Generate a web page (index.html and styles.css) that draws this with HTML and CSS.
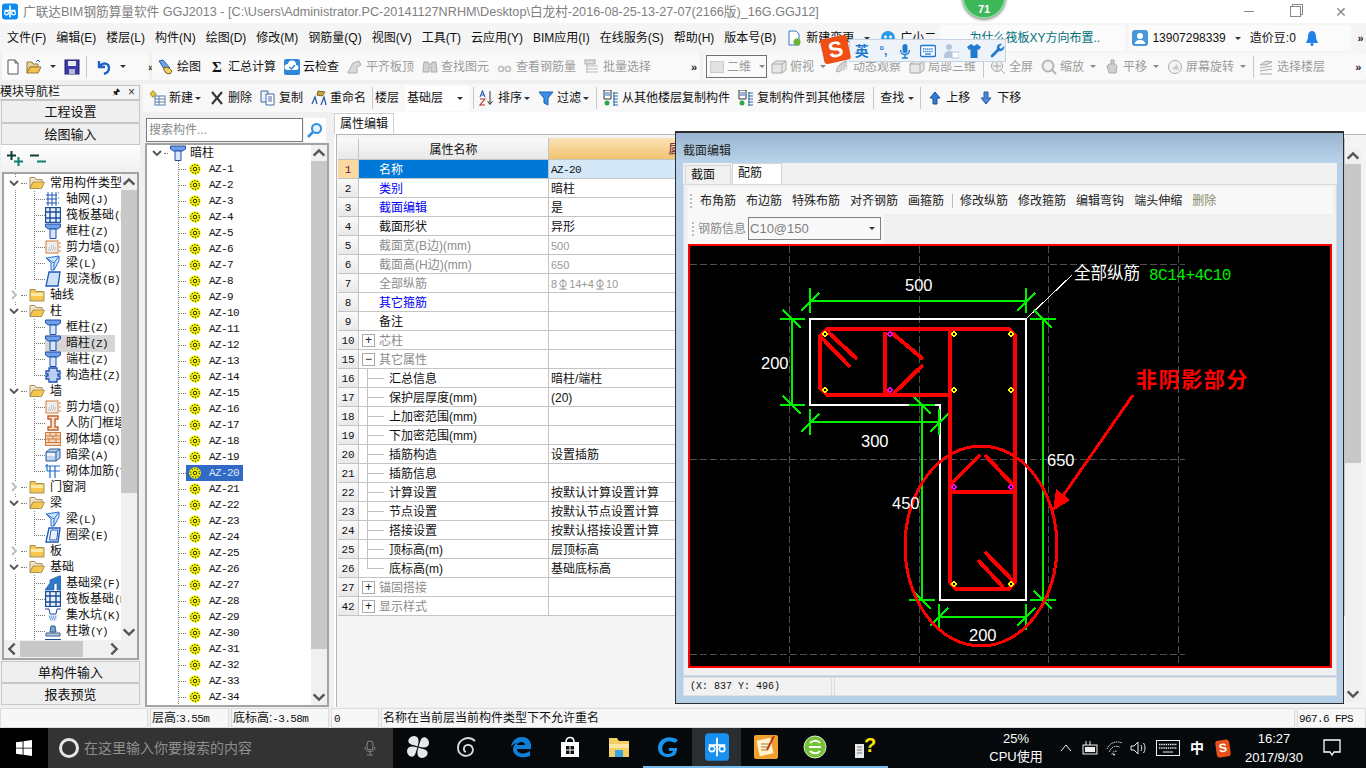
FILE: index.html
```html
<!DOCTYPE html>
<html lang="zh-CN">
<head>
<meta charset="utf-8">
<title>广联达BIM钢筋算量软件 GGJ2013</title>
<link rel="stylesheet" href="styles.css">
</head>
<body>
<svg class="defs" aria-hidden="true">
  <symbol id="logo" viewBox="0 0 16 16"><rect width="16" height="16" rx="3" fill="#0d8bf0"/><path d="M8 2v12M2.500 7h11" stroke="#fff" stroke-width="1.600"/><circle cx="4.500" cy="9.500" r="1.900" fill="none" stroke="#fff" stroke-width="1.200"/><circle cx="11.500" cy="9.500" r="1.900" fill="none" stroke="#fff" stroke-width="1.200"/></symbol>
  <symbol id="col" viewBox="0 0 16 16"><path d="M.5 1h15v3l-3 2h-9l-3-2z" fill="#6f9fe4" stroke="#1d4fb0"/><path d="M5 6h6v9.500H5z" fill="#d7e6fb" stroke="#1d4fb0"/></symbol>
  <symbol id="gear" viewBox="0 0 12 12"><circle cx="6" cy="6" r="5.800" fill="#ff0"/><circle cx="6" cy="6" r="4.300" fill="none" stroke="#222" stroke-width="1.100" stroke-dasharray="1.300 1.400"/><circle cx="6" cy="6" r="1.800" fill="#ff0" stroke="#222"/></symbol>
  <symbol id="fold" viewBox="0 0 16 16"><path d="M1 2.500h5l1 2h8v9.500H1z" fill="#f5c84c" stroke="#a98f58"/><path d="M2 6h12v3H2z" fill="#fbe9a6"/></symbol>
  <symbol id="foldo" viewBox="0 0 16 16"><path d="M1 2.500h5l1 2h6v3H4L1 13z" fill="#f0e6c4" stroke="#a98f58"/><path d="M4 7h11.500l-3 6.500H1z" fill="#f5c84c" stroke="#a98f58"/></symbol>
  <symbol id="axis" viewBox="0 0 16 16"><path d="M1 4h11M1 8h11M1 12h11M3 1v14M7 1v14M11 1v14" stroke="#1f58b5" fill="none"/><path d="M13 2h2M13 7h2M13 12h2" stroke="#1f58b5" stroke-dasharray="1 1"/></symbol>
  <symbol id="raft" viewBox="0 0 16 16"><rect x=".5" y=".5" width="15" height="15" fill="#eaf1fb" stroke="#1a4d96" stroke-width="1.400"/><path d="M5 1v14M11 1v14M1 5h14M1 11h14" stroke="#1a4d96" stroke-width="1.400"/></symbol>
  <symbol id="wall" viewBox="0 0 16 16"><rect x="1" y="2" width="12" height="12" fill="#eee" stroke="#d77a3a"/><path d="M3 11h8M4 9h7M6 7h4" stroke="#999" stroke-dasharray="1 1"/><path d="M14 4h2M14 8h2M14 12h2" stroke="#d77a3a"/></symbol>
  <symbol id="beam" viewBox="0 0 16 16"><path d="M1 3l13-2v5L9 15H6V8z" fill="#cfe2fa" stroke="#2c74d0"/><path d="M1 3l8 5M14 1L9 8v7" fill="none" stroke="#2c74d0"/></symbol>
  <symbol id="slab" viewBox="0 0 16 16"><path d="M4 1h11l-2 14H1z" fill="#cfe2fa" stroke="#1d58b8" stroke-width="1.300"/></symbol>
  <symbol id="ring" viewBox="0 0 16 16"><path d="M4 1h11l-2 14H1z" fill="#fff" stroke="#1d58b8" stroke-width="1.400"/><path d="M6 3h7l-1.300 10H4.400z" fill="#e9f2fd" stroke="#1d58b8"/></symbol>
  <symbol id="cons" viewBox="0 0 16 16"><path d="M4 1h8v3h3v3h-2v2h2v3h-3v3H4v-3H1V9h2V7H1V4h3z" fill="#b9d0f3" stroke="#1d4fb0" stroke-width="1.300"/></symbol>
  <symbol id="door" viewBox="0 0 16 16"><path d="M3 1h10v3h-3v8h3v3H3v-3h3V4H3z" fill="#fbe6d3" stroke="#c2602a" stroke-width="1.400"/></symbol>
  <symbol id="brick" viewBox="0 0 16 16"><rect x=".5" y="1.500" width="15" height="13" fill="#f8d6b8" stroke="#cf7a45"/><path d="M1 5h14M1 8h14M1 11.500h14M5 2v3M11 2v3M8 5v3M4 8v3.500M11 8v3.500" stroke="#cf7a45"/></symbol>
  <symbol id="hbeam" viewBox="0 0 16 16"><path d="M1 5l4-3h10v9l-4 3H1z" fill="#bcd3ee" stroke="#2a5c9a"/><path d="M1 5h10v9M11 5l4-3" fill="none" stroke="#2a5c9a"/><path d="M2 6h8v3H2z" fill="#e8f0fa"/></symbol>
  <symbol id="rein" viewBox="0 0 16 16"><path d="M0 3h15M2 8h13M5 3v12M10 3v12M2 1v7" stroke="#1f6bd0" fill="none" stroke-width="1.200"/></symbol>
  <symbol id="fbeam" viewBox="0 0 16 16"><path d="M0 15l5-7V5l9-4h2v14h-4V8l-3 1v6z" fill="#2f79c9" stroke="#1d4f94" stroke-width=".6"/></symbol>
  <symbol id="pit" viewBox="0 0 16 16"><path d="M0 2h4l1 5h6l1-5h4" stroke="#1d4f94" fill="none"/><path d="M3 8h10l-2 6H5z" fill="#cfe2fa"/><path d="M4 10h8M5 12h6" stroke="#3874c0" stroke-dasharray="1 1"/></symbol>
  <symbol id="pier" viewBox="0 0 16 16"><path d="M6 3h4l1 6H5z" fill="#7aa3d6" stroke="#345d92"/><path d="M1 10h14v3H1z" fill="#b6c9de" stroke="#345d92"/></symbol>
  <symbol id="plus2" viewBox="0 0 16 15"><path d="M4.500 0v9M0 4.500h9" stroke="#0b3f38" stroke-width="2"/><path d="M11.500 6v9M7 10.500h9" stroke="#0a7f6c" stroke-width="2"/></symbol>
  <symbol id="minus2" viewBox="0 0 16 15"><path d="M0 4.500h9" stroke="#0b3f38" stroke-width="2"/><path d="M7 10.500h9" stroke="#0a7f6c" stroke-width="2"/></symbol>
  <symbol id="new" viewBox="0 0 16 16"><path d="M3 1h7l3 3v11H3z" fill="#fff" stroke="#556"/><path d="M10 1v3h3" fill="none" stroke="#556"/></symbol>
  <symbol id="open" viewBox="0 0 16 16"><path d="M1 3h5l1 2h5v3H4L1 14z" fill="#e8d49c" stroke="#93763c"/><path d="M4 8h11l-3 6H1z" fill="#f6c44d" stroke="#93763c"/><path d="M10 3l2-2 2 2" fill="none" stroke="#2a62b5"/></symbol>
  <symbol id="save" viewBox="0 0 16 16"><rect x="1" y="1" width="14" height="14" fill="#3b3ba8" stroke="#22226a"/><rect x="4" y="2" width="8" height="5" fill="#e9e9f8"/><rect x="5" y="10" width="6" height="5" fill="#b7b7d6"/></symbol>
  <symbol id="undo" viewBox="0 0 16 16"><path d="M3 2v6h6M4 7c3-4 9-3 9 2 0 3-2 5-5 6" fill="none" stroke="#1d62c4" stroke-width="2.400"/></symbol>
  <symbol id="draw" viewBox="0 0 16 16"><path d="M1 2l4-1 7 8-4 4z" fill="#6ea4e6" stroke="#2c5ea8"/><path d="M6 8l5 1 3 3-2 3-4-1-2-3z" fill="#f4d06a" stroke="#7a6420"/></symbol>
  <symbol id="cloud" viewBox="0 0 16 16"><rect width="16" height="16" rx="2" fill="#2f86d6"/><path d="M3 11a3 3 0 0 1 1-6 4 4 0 0 1 8 1 2.500 2.500 0 0 1 0 5z" fill="#fff"/><path d="M5.500 8l2 2 3.500-4" fill="none" stroke="#2f86d6" stroke-width="1.500"/></symbol>
  <symbol id="g1" viewBox="0 0 16 16"><path d="M1 13l5-9 6-2 2 4-4 2v6H1z" fill="#d8d8d8" stroke="#b0b0b0"/></symbol>
  <symbol id="g2" viewBox="0 0 16 16"><path d="M2 3h4v2h4V3h4l1 10H9V8H7v5H1z" fill="#d2d2d2" stroke="#aaa"/></symbol>
  <symbol id="g3" viewBox="0 0 16 16"><circle cx="4" cy="10" r="2.500" fill="none" stroke="#bbb" stroke-width="1.400"/><circle cx="11" cy="10" r="2.500" fill="none" stroke="#bbb" stroke-width="1.400"/><path d="M6 9h3" stroke="#bbb"/></symbol>
  <symbol id="g4" viewBox="0 0 16 16"><rect x="1" y="1" width="10" height="4" fill="#ddd" stroke="#aaa"/><path d="M2 7h12M2 10h12M2 13h12M3 5v9" stroke="#bbb"/></symbol>
  <symbol id="g5" viewBox="0 0 16 16"><path d="M1 5l4-3h10v9l-4 3H1z" fill="#e6e6e6" stroke="#aaa"/><path d="M1 5h10v9M11 5l4-3" fill="none" stroke="#aaa"/></symbol>
  <symbol id="g6" viewBox="0 0 16 16"><path d="M3 13c-2-3 3-9 9-11 1 3-2 10-9 11z" fill="#d8d8d8" stroke="#aaa"/><circle cx="10" cy="8" r="3" fill="none" stroke="#ccc"/></symbol>
  <symbol id="g7" viewBox="0 0 16 16"><circle cx="7" cy="7" r="5.500" fill="#eee" stroke="#aaa"/><path d="M7 3v8M3 7h8M11 11l4 4" stroke="#aaa"/></symbol>
  <symbol id="g8" viewBox="0 0 16 16"><circle cx="7" cy="7" r="5.500" fill="#f2f2f2" stroke="#b5b5b5" stroke-width="2"/><path d="M11 11l4 4" stroke="#b5b5b5" stroke-width="2"/></symbol>
  <symbol id="g9" viewBox="0 0 16 16"><path d="M7 5V1h3v4M3 7c2-3 9-3 10 0l-1 7H5z" fill="#cfcfcf" stroke="#aaa"/></symbol>
  <symbol id="g10" viewBox="0 0 16 16"><circle cx="8" cy="8" r="6.500" fill="#f4f4f4" stroke="#aaa"/><path d="M5 10l5-5 2 6z" fill="#ccc"/></symbol>
  <symbol id="g11" viewBox="0 0 16 16"><path d="M2 6l6-4 6 1-6 3zM2 9l12-2M2 12l12-2M2 15h12" fill="#ddd" stroke="#aaa"/></symbol>
  <symbol id="addn" viewBox="0 0 16 16"><path d="M2 1h2v2h2v2H4v2H2V5H0V3h2z" fill="#f2d23c" stroke="#8c7715" stroke-width=".6"/><rect x="5" y="6" width="10" height="9" fill="#fff" stroke="#5a7aa6"/><path d="M5 9h10M5 12h10M9 6v9" stroke="#5a7aa6"/></symbol>
  <symbol id="x" viewBox="0 0 16 16"><path d="M3 2l10 12M13 2L3 14" stroke="#333" stroke-width="2"/></symbol>
  <symbol id="copy" viewBox="0 0 16 16"><path d="M1 1h7v11H1z" fill="#e8f0fb" stroke="#4668a0"/><path d="M6 4h8v11H6z" fill="#fff" stroke="#4668a0"/><path d="M8 7h4M8 9h4M8 11h4" stroke="#4668a0"/></symbol>
  <symbol id="ren" viewBox="0 0 16 16"><path d="M7 1l7 1-3 4-5-1z" fill="#caa53d" stroke="#7b6420"/><path d="M1 14l3-7 2 7M10 15l3-8 2 8" fill="none" stroke="#2a5dab" stroke-width="1.300"/></symbol>
  <symbol id="sort" viewBox="0 0 16 16"><path d="M1 7l2.500-6L6 7M2 5h3" fill="none" stroke="#2a5dab" stroke-width="1.100"/><path d="M1 9h5l-5 6h5" fill="none" stroke="#b03030" stroke-width="1.100"/><path d="M11 1v13M8.500 11l2.500 3.500 2.500-3.500" fill="none" stroke="#333"/></symbol>
  <symbol id="filt" viewBox="0 0 16 16"><path d="M1 2h14l-5 6v7l-4-2V8z" fill="#3d8ee6" stroke="#1f5fae"/></symbol>
  <symbol id="cpy2" viewBox="0 0 16 16"><path d="M1 0h7v9H1z" fill="#fff" stroke="#333"/><path d="M2 3h5M2 5h5" stroke="#2f6fc4"/><circle cx="4" cy="13" r="2.500" fill="#2fa84a"/><path d="M10 3h5M10 6h5M10 9h5M10 12h5M10 15h5M11 2v14" stroke="#2a6fa8"/></symbol>
  <symbol id="up" viewBox="0 0 16 16"><path d="M8 2l5 6h-3v6H6V8H3z" fill="#2f7fd8" stroke="#1a4f96"/></symbol>
  <symbol id="down" viewBox="0 0 16 16"><path d="M8 14l5-6h-3V2H6v6H3z" fill="#4b86d8" stroke="#2a5a9c"/></symbol>
  <symbol id="mag" viewBox="0 0 16 16"><circle cx="9.500" cy="6.500" r="4.500" fill="#e6f3ff" stroke="#2f8fe0" stroke-width="2"/><path d="M6 10l-5 5" stroke="#2f8fe0" stroke-width="2.500"/></symbol>
  <symbol id="chg" viewBox="0 0 16 16"><path d="M3 1h7l3 3v11H3z" fill="#fff" stroke="#2a7ad0"/><circle cx="11" cy="12" r="3.500" fill="#6ab42f"/></symbol>
  <symbol id="xiao" viewBox="0 0 16 16"><circle cx="8" cy="8" r="7" fill="#2a9be8"/><circle cx="5.500" cy="7" r="1.400" fill="#fff"/><circle cx="10.500" cy="7" r="1.400" fill="#fff"/></symbol>
  <symbol id="user" viewBox="0 0 16 16"><rect width="16" height="16" rx="3" fill="#4a97d8"/><circle cx="8" cy="6" r="3" fill="#fff"/><path d="M3 14c0-3 2-4 5-4s5 1 5 4z" fill="#fff"/></symbol>
  <symbol id="bell" viewBox="0 0 16 16"><path d="M8 1c3 0 4 3 4 6 0 3 2 5 2 6H2c0-1 2-3 2-6 0-3 1-6 4-6z" fill="#1e80e8"/><circle cx="8" cy="14.500" r="1.500" fill="#1e80e8"/></symbol>
  <symbol id="mic" viewBox="0 0 16 16"><rect x="5.500" y="1" width="5" height="9" rx="2.500" fill="#1f7ad0"/><path d="M3.500 7c0 6 9 6 9 0M8 12v3M5 15h6" fill="none" stroke="#1f7ad0" stroke-width="1.400"/></symbol>
  <symbol id="kbd" viewBox="0 0 16 16"><rect x=".5" y="2.500" width="15" height="11" rx="1.500" fill="#fff" stroke="#1f7ad0" stroke-width="1.400"/><path d="M3 6h10M3 8.500h10" stroke="#1f7ad0" stroke-width="1.300" stroke-dasharray="1.300 .8"/><path d="M5 11h6" stroke="#1f7ad0" stroke-width="1.300"/></symbol>
  <symbol id="ppl" viewBox="0 0 16 16"><circle cx="6" cy="4" r="3" fill="#b4c6dc"/><path d="M1 15c0-5 2-7 5-7s4 1 5 3v4z" fill="#b4c6dc"/><rect x="9" y="9" width="7" height="6" fill="#fff" stroke="#b4c6dc"/></symbol>
  <symbol id="shirt" viewBox="0 0 16 16"><path d="M5 1L1 4l2 3 1.500-1v9h7V6L13 7l2-3-4-3-3 2z" fill="#1f7ad0"/></symbol>
  <symbol id="wrench" viewBox="0 0 16 16"><path d="M15 3l-3 3-2-2 3-3c-3-1-6 2-5 5L2 12c-1 2 1 3 2 2l6-6c3 1 6-2 5-5z" fill="#1f7ad0"/></symbol>
  <symbol id="win" viewBox="0 0 16 16"><path d="M0 2.300l6.600-.9v6.300H0zM7.500 1.300L16 0v7.700H7.500zM0 8.500h6.600v6.200L0 13.800zM7.500 8.500H16V16l-8.500-1.200z" fill="#fff"/></symbol>
  <symbol id="mictb" viewBox="0 0 16 16"><rect x="5" y="1" width="6" height="9" rx="3" fill="none" stroke="#888"/><path d="M3 7c0 6 10 6 10 0M8 12v3M5 15h6" fill="none" stroke="#888"/></symbol>
  <symbol id="pin" viewBox="0 0 24 24"><path d="M11.500 11.500C8 10 5 10 3 8 1 5 4 1 8 1c4 0 6 4 3.500 10.500zM12.500 11.500C14 8 14 5 16 3c3-2 7 1 7 5 0 4-4 6-10.500 3.500zM12.500 12.500C16 14 19 14 21 16c2 3-1 7-5 7-4 0-6-4-3.500-10.500zM11.500 12.500C10 16 10 19 8 21c-3 2-7-1-7-5 0-4 4-6 10.500-3.500z" fill="#e4e8ea"/></symbol>
  <symbol id="spir" viewBox="0 0 24 24"><path d="M20 6C14 0 3 4 3 13c0 7 8 10 13 6 4-4 1-10-4-9-4 1-4 6-1 7" fill="none" stroke="#d8dcdf" stroke-width="1.800"/></symbol>
  <symbol id="edge" viewBox="0 0 24 24"><path d="M2 12C3 5 8 2 13 2c6 0 10 4 9 12H8c0 5 8 6 13 2v5c-7 3-17 1-17-7 0-3 2-5 4-6-2 0-5 2-6 4zM8 10h8c0-4-7-4-8 0z" fill="#0f7fd8"/></symbol>
  <symbol id="store" viewBox="0 0 24 24"><path d="M3 7h18v15H3z" fill="#fff"/><path d="M8 7c0-6 8-6 8 0" fill="none" stroke="#fff" stroke-width="1.600"/><path d="M8 11h3.500v3.500H8zM12.500 11H16v3.500h-3.500zM8 15.500h3.500V19H8zM12.500 15.500H16V19h-3.500z" fill="#111"/></symbol>
  <symbol id="expl" viewBox="0 0 24 24"><path d="M2 3h8l2 3h10v16H2z" fill="#f3cf63"/><path d="M2 9h20v4H2z" fill="#fbe7a3"/><path d="M8 15h8v7H8z" fill="#3ba3de"/></symbol>
  <symbol id="gapp" viewBox="0 0 24 24"><path d="M22 5C14-1 2 3 2 13c0 8 9 11 15 8 3-1 4-4 4-8h-8v3h4c-1 3-6 4-9 2-3-3-2-9 2-11 3-2 8 0 9 1z" fill="#1794ea"/></symbol>
  <symbol id="gtj" viewBox="0 0 26 30"><rect width="26" height="30" rx="4" fill="#1790f0"/><path d="M13 5v20M4 13h18" stroke="#fff" stroke-width="2"/><circle cx="7.500" cy="17" r="3" fill="none" stroke="#fff" stroke-width="1.800"/><circle cx="18.500" cy="17" r="3" fill="none" stroke="#fff" stroke-width="1.800"/></symbol>
  <symbol id="note" viewBox="0 0 24 24"><rect width="24" height="24" rx="2" fill="#f0a02c"/><rect x="4" y="4" width="14" height="16" fill="#fff2cf" transform="rotate(-12 11 12)"/><path d="M7 9h8M7 12h8M7 15h6" stroke="#a87a2c"/><path d="M20 1l-7 14" stroke="#c03a1a" stroke-width="2"/></symbol>
  <symbol id="iee" viewBox="0 0 24 24"><circle cx="12" cy="12" r="11" fill="#73c234" stroke="#d9e8cf"/><path d="M6 12h12M7 8c3-3 8-3 10 0M7 16c3 3 8 3 10 0" stroke="#fff" stroke-width="2" fill="none"/></symbol>
  <symbol id="help" viewBox="0 0 24 24"><rect x="3" y="9" width="9" height="14" fill="#e8e8e8"/><path d="M5 12h5M5 15h5M5 18h5" stroke="#777"/><text x="12" y="17" font-size="20" font-weight="700" fill="#ffe000" font-family="Liberation Sans">?</text></symbol>
  <symbol id="batt" viewBox="0 0 18 16"><rect x="1" y="5" width="14" height="9" fill="#111" stroke="#eee"/><rect x="3" y="7" width="10" height="5" fill="#eee"/><path d="M4 1v4M8 1v4" stroke="#eee"/></symbol>
  <symbol id="wifi" viewBox="0 0 18 16"><path d="M1 9a11 11 0 0 1 15-6M3.500 12a7 7 0 0 1 10-5M6 14.500a3.500 3.500 0 0 1 5-3" fill="none" stroke="#ddd" stroke-dasharray="1.600 .7"/><circle cx="8" cy="14.500" r="1" fill="#eee"/></symbol>
  <symbol id="spk" viewBox="0 0 18 16"><path d="M1 6h3l4-4v12l-4-4H1z" fill="none" stroke="#eee"/><path d="M11 5c1 2 1 4 0 6M13.500 3c2 3 2 7 0 10" fill="none" stroke="#eee"/></symbol>
  <symbol id="kbw" viewBox="0 0 24 16"><rect x=".5" y=".5" width="23" height="15" fill="none" stroke="#eee"/><path d="M3 4.500h18M3 8h18" stroke="#eee" stroke-width="1.400" stroke-dasharray="1.400 .8"/><path d="M7 12h10" stroke="#eee"/></symbol>
  <symbol id="notif" viewBox="0 0 18 18"><path d="M1 1h16v12h-6l-2 3-2-3H1z" fill="none" stroke="#fff" stroke-width="1.300"/></symbol>
  <symbol id="rebar" viewBox="0 0 10 12"><circle cx="5" cy="5" r="3.500" fill="none" stroke="#8c8c8c"/><path d="M5 0v11M1 11h8" stroke="#8c8c8c"/></symbol>
</svg>

<div class="app">
  <header class="titlebar">
    <svg class="logo"><use href="#logo"/></svg>
    <span class="title-text">广联达BIM钢筋算量软件 GGJ2013 - [C:\Users\Administrator.PC-20141127NRHM\Desktop\白龙村-2016-08-25-13-27-07(2166版)_16G.GGJ12]</span>
    <div class="winctl">
      <span class="wmin"></span><span class="wmax"></span><span class="wclose">✕</span>
    </div>
  </header>

  <nav class="menubar">
    <span>文件(F)</span><span>编辑(E)</span><span>楼层(L)</span><span>构件(N)</span><span>绘图(D)</span><span>修改(M)</span><span>钢筋量(Q)</span><span>视图(V)</span><span>工具(T)</span><span>云应用(Y)</span><span>BIM应用(I)</span><span>在线服务(S)</span><span>帮助(H)</span><span>版本号(B)</span>
    <span class="mi"><svg class="i"><use href="#chg"/></svg>新建变更<i class="car"></i></span>
    <span class="mi"><svg class="i"><use href="#xiao"/></svg>广小二</span>
    <span class="qa">为什么筏板XY方向布置..</span>
    <span class="acct"><svg class="i"><use href="#user"/></svg>13907298339<i class="car"></i><b class="beans">造价豆:0</b><svg class="i bell"><use href="#bell"/></svg></span>
    <span class="more">»</span>
  </nav>

  <div class="toolbar1">
    <div class="tgrp g-a">
      <svg class="i"><use href="#new"/></svg><svg class="i"><use href="#open"/></svg><i class="car"></i><svg class="i"><use href="#save"/></svg><i class="sep"></i><svg class="i"><use href="#undo"/></svg><i class="car"></i><span class="more">»</span>
    </div>
    <div class="tgrp g-b">
      <span class="it"><svg class="i"><use href="#draw"/></svg>绘图</span>
      <span class="it"><b class="sigma">Σ</b>汇总计算</span>
      <span class="it"><svg class="i"><use href="#cloud"/></svg>云检查</span>
      <span class="it dis"><svg class="i"><use href="#g1"/></svg>平齐板顶</span>
      <span class="it dis"><svg class="i"><use href="#g2"/></svg>查找图元</span>
      <span class="it dis"><svg class="i"><use href="#g3"/></svg>查看钢筋量</span>
      <span class="it dis"><svg class="i"><use href="#g4"/></svg>批量选择</span>
      <span class="more">»</span>
    </div>
    <div class="tgrp g-c dis">
      <span class="viewsel"><i class="sq"></i>二维<i class="car"></i></span>
      <span class="it"><svg class="i"><use href="#g5"/></svg>俯视<i class="car"></i></span>
      <span class="it"><svg class="i"><use href="#g6"/></svg>动态观察</span>
      <span class="it"><svg class="i"><use href="#g5"/></svg>局部三维</span>
      <i class="sep"></i>
      <span class="it"><svg class="i"><use href="#g7"/></svg>全屏</span>
      <span class="it"><svg class="i"><use href="#g8"/></svg>缩放<i class="car"></i></span>
      <span class="it"><svg class="i"><use href="#g9"/></svg>平移<i class="car"></i></span>
      <span class="it"><svg class="i"><use href="#g10"/></svg>屏幕旋转<i class="car"></i></span>
      <i class="sep sep-end"></i>
      <span class="it"><svg class="i"><use href="#g11"/></svg>选择楼层</span>
      <span class="more">»</span>
    </div>
  </div>

  <main class="work">
    <aside class="nav">
      <div class="nav-head"><span>模块导航栏</span><span class="nav-ctl">🖈</span><span class="nav-x">×</span></div>
      <div class="nav-btn">工程设置</div>
      <div class="nav-btn">绘图输入</div>
      <div class="nav-tools"><svg class="pm"><use href="#plus2"/></svg><svg class="pm"><use href="#minus2"/></svg></div>
      <div class="frame">
        <div class="frame-top">
          <div class="tree lefttree">
            <div class="r root"><svg class="chev"><use href="#cd"/></svg><i class="hl"></i><svg class="i"><use href="#foldo"/></svg><span>常用构件类型</span></div>
            <div class="r c"><i class="hl"></i><svg class="i"><use href="#axis"/></svg><span>轴网<u>(J)</u></span></div>
            <div class="r c"><i class="hl"></i><svg class="i"><use href="#raft"/></svg><span>筏板基础<u>(F)</u></span></div>
            <div class="r c"><i class="hl"></i><svg class="i"><use href="#col"/></svg><span>框柱<u>(Z)</u></span></div>
            <div class="r c"><i class="hl"></i><svg class="i"><use href="#wall"/></svg><span>剪力墙<u>(Q)</u></span></div>
            <div class="r c"><i class="hl"></i><svg class="i"><use href="#beam"/></svg><span>梁<u>(L)</u></span></div>
            <div class="r c last"><i class="hl"></i><svg class="i"><use href="#slab"/></svg><span>现浇板<u>(B)</u></span></div>
            <div class="r root"><svg class="chev"><use href="#cr"/></svg><i class="hl"></i><svg class="i"><use href="#fold"/></svg><span>轴线</span></div>
            <div class="r root"><svg class="chev"><use href="#cd"/></svg><i class="hl"></i><svg class="i"><use href="#foldo"/></svg><span>柱</span></div>
            <div class="r c"><i class="hl"></i><svg class="i"><use href="#col"/></svg><span>框柱<u>(Z)</u></span></div>
            <div class="r c"><i class="hl"></i><span class="sel"><svg class="i"><use href="#col"/></svg><span>暗柱<u>(Z)</u></span></span></div>
            <div class="r c"><i class="hl"></i><svg class="i"><use href="#col"/></svg><span>端柱<u>(Z)</u></span></div>
            <div class="r c last"><i class="hl"></i><svg class="i"><use href="#cons"/></svg><span>构造柱<u>(Z)</u></span></div>
            <div class="r root"><svg class="chev"><use href="#cd"/></svg><i class="hl"></i><svg class="i"><use href="#foldo"/></svg><span>墙</span></div>
            <div class="r c"><i class="hl"></i><svg class="i"><use href="#wall"/></svg><span>剪力墙<u>(Q)</u></span></div>
            <div class="r c"><i class="hl"></i><svg class="i"><use href="#door"/></svg><span>人防门框墙</span></div>
            <div class="r c"><i class="hl"></i><svg class="i"><use href="#brick"/></svg><span>砌体墙<u>(Q)</u></span></div>
            <div class="r c"><i class="hl"></i><svg class="i"><use href="#hbeam"/></svg><span>暗梁<u>(A)</u></span></div>
            <div class="r c last"><i class="hl"></i><svg class="i"><use href="#rein"/></svg><span>砌体加筋<u>(Y)</u></span></div>
            <div class="r root"><svg class="chev"><use href="#cr"/></svg><i class="hl"></i><svg class="i"><use href="#fold"/></svg><span>门窗洞</span></div>
            <div class="r root"><svg class="chev"><use href="#cd"/></svg><i class="hl"></i><svg class="i"><use href="#foldo"/></svg><span>梁</span></div>
            <div class="r c"><i class="hl"></i><svg class="i"><use href="#beam"/></svg><span>梁<u>(L)</u></span></div>
            <div class="r c last"><i class="hl"></i><svg class="i"><use href="#ring"/></svg><span>圈梁<u>(E)</u></span></div>
            <div class="r root"><svg class="chev"><use href="#cr"/></svg><i class="hl"></i><svg class="i"><use href="#fold"/></svg><span>板</span></div>
            <div class="r root"><svg class="chev"><use href="#cd"/></svg><i class="hl"></i><svg class="i"><use href="#foldo"/></svg><span>基础</span></div>
            <div class="r c"><i class="hl"></i><svg class="i"><use href="#fbeam"/></svg><span>基础梁<u>(F)</u></span></div>
            <div class="r c"><i class="hl"></i><svg class="i"><use href="#raft"/></svg><span>筏板基础<u>(M)</u></span></div>
            <div class="r c"><i class="hl"></i><svg class="i"><use href="#pit"/></svg><span>集水坑<u>(K)</u></span></div>
            <div class="r c"><i class="hl"></i><svg class="i"><use href="#pier"/></svg><span>柱墩<u>(Y)</u></span></div>
            <div class="r c"><i class="hl"></i><svg class="i"><use href="#raft"/></svg><span>筏板主筋<u>(R)</u></span></div>
          </div>
          <div class="vs left-vs"><svg class="sarrow"><use href="#cu"/></svg><div class="thumb"></div><svg class="sarrow bottom"><use href="#cd"/></svg></div>
        </div>
        <div class="hs"><svg class="sarrow"><use href="#cl"/></svg><div class="hthumb"></div><svg class="sarrow"><use href="#crb"/></svg></div>
      </div>
      <div class="nav-btn b2">单构件输入</div>
      <div class="nav-btn b2">报表预览</div>
    </aside>

    <section class="content">
      <div class="toolbar2">
        <span class="it2"><svg class="i"><use href="#addn"/></svg>新建<i class="car"></i></span>
        <span class="it2"><svg class="i"><use href="#x"/></svg>删除</span>
        <span class="it2"><svg class="i"><use href="#copy"/></svg>复制</span>
        <span class="it2"><svg class="i"><use href="#ren"/></svg>重命名</span>
        <i class="sep sp2"></i>
        <span class="lbl">楼层</span>
        <span class="floor">基础层<i class="car"></i></span>
        <i class="sep sp3"></i>
        <span class="it2"><svg class="i"><use href="#sort"/></svg>排序<i class="car"></i></span>
        <span class="it2"><svg class="i"><use href="#filt"/></svg>过滤<i class="car"></i></span>
        <i class="sep sp4"></i>
        <span class="it2"><svg class="i"><use href="#cpy2"/></svg>从其他楼层复制构件</span>
        <span class="it2"><svg class="i"><use href="#cpy2"/></svg>复制构件到其他楼层</span>
        <i class="sep sp5"></i>
        <span class="lbl">查找<i class="car"></i></span>
        <i class="sep sp6"></i>
        <span class="it2"><svg class="i"><use href="#up"/></svg>上移</span>
        <span class="it2"><svg class="i"><use href="#down"/></svg>下移</span>
      </div>
      <div class="body">
        <div class="mid">
          <div class="search"><span class="search-in">搜索构件...</span><span class="search-btn"><svg class="i"><use href="#mag"/></svg></span></div>
          <div class="frame midframe">
            <div class="frame-top">
              <div class="tree aztree">
                <div class="r zroot"><svg class="chev"><use href="#cd"/></svg><i class="hl"></i><svg class="i"><use href="#col"/></svg><span>暗柱</span></div>
                <div class="r z"><i class="hl"></i><span class="zi"><svg class="g"><use href="#gear"/></svg><u>AZ-1</u></span></div>
                <div class="r z"><i class="hl"></i><span class="zi"><svg class="g"><use href="#gear"/></svg><u>AZ-2</u></span></div>
                <div class="r z"><i class="hl"></i><span class="zi"><svg class="g"><use href="#gear"/></svg><u>AZ-3</u></span></div>
                <div class="r z"><i class="hl"></i><span class="zi"><svg class="g"><use href="#gear"/></svg><u>AZ-4</u></span></div>
                <div class="r z"><i class="hl"></i><span class="zi"><svg class="g"><use href="#gear"/></svg><u>AZ-5</u></span></div>
                <div class="r z"><i class="hl"></i><span class="zi"><svg class="g"><use href="#gear"/></svg><u>AZ-6</u></span></div>
                <div class="r z"><i class="hl"></i><span class="zi"><svg class="g"><use href="#gear"/></svg><u>AZ-7</u></span></div>
                <div class="r z"><i class="hl"></i><span class="zi"><svg class="g"><use href="#gear"/></svg><u>AZ-8</u></span></div>
                <div class="r z"><i class="hl"></i><span class="zi"><svg class="g"><use href="#gear"/></svg><u>AZ-9</u></span></div>
                <div class="r z"><i class="hl"></i><span class="zi"><svg class="g"><use href="#gear"/></svg><u>AZ-10</u></span></div>
                <div class="r z"><i class="hl"></i><span class="zi"><svg class="g"><use href="#gear"/></svg><u>AZ-11</u></span></div>
                <div class="r z"><i class="hl"></i><span class="zi"><svg class="g"><use href="#gear"/></svg><u>AZ-12</u></span></div>
                <div class="r z"><i class="hl"></i><span class="zi"><svg class="g"><use href="#gear"/></svg><u>AZ-13</u></span></div>
                <div class="r z"><i class="hl"></i><span class="zi"><svg class="g"><use href="#gear"/></svg><u>AZ-14</u></span></div>
                <div class="r z"><i class="hl"></i><span class="zi"><svg class="g"><use href="#gear"/></svg><u>AZ-15</u></span></div>
                <div class="r z"><i class="hl"></i><span class="zi"><svg class="g"><use href="#gear"/></svg><u>AZ-16</u></span></div>
                <div class="r z"><i class="hl"></i><span class="zi"><svg class="g"><use href="#gear"/></svg><u>AZ-17</u></span></div>
                <div class="r z"><i class="hl"></i><span class="zi"><svg class="g"><use href="#gear"/></svg><u>AZ-18</u></span></div>
                <div class="r z"><i class="hl"></i><span class="zi"><svg class="g"><use href="#gear"/></svg><u>AZ-19</u></span></div>
                <div class="r z"><i class="hl"></i><span class="zi on"><svg class="g"><use href="#gear"/></svg><u>AZ-20</u></span></div>
                <div class="r z"><i class="hl"></i><span class="zi"><svg class="g"><use href="#gear"/></svg><u>AZ-21</u></span></div>
                <div class="r z"><i class="hl"></i><span class="zi"><svg class="g"><use href="#gear"/></svg><u>AZ-22</u></span></div>
                <div class="r z"><i class="hl"></i><span class="zi"><svg class="g"><use href="#gear"/></svg><u>AZ-23</u></span></div>
                <div class="r z"><i class="hl"></i><span class="zi"><svg class="g"><use href="#gear"/></svg><u>AZ-24</u></span></div>
                <div class="r z"><i class="hl"></i><span class="zi"><svg class="g"><use href="#gear"/></svg><u>AZ-25</u></span></div>
                <div class="r z"><i class="hl"></i><span class="zi"><svg class="g"><use href="#gear"/></svg><u>AZ-26</u></span></div>
                <div class="r z"><i class="hl"></i><span class="zi"><svg class="g"><use href="#gear"/></svg><u>AZ-27</u></span></div>
                <div class="r z"><i class="hl"></i><span class="zi"><svg class="g"><use href="#gear"/></svg><u>AZ-28</u></span></div>
                <div class="r z"><i class="hl"></i><span class="zi"><svg class="g"><use href="#gear"/></svg><u>AZ-29</u></span></div>
                <div class="r z"><i class="hl"></i><span class="zi"><svg class="g"><use href="#gear"/></svg><u>AZ-30</u></span></div>
                <div class="r z"><i class="hl"></i><span class="zi"><svg class="g"><use href="#gear"/></svg><u>AZ-31</u></span></div>
                <div class="r z"><i class="hl"></i><span class="zi"><svg class="g"><use href="#gear"/></svg><u>AZ-32</u></span></div>
                <div class="r z"><i class="hl"></i><span class="zi"><svg class="g"><use href="#gear"/></svg><u>AZ-33</u></span></div>
                <div class="r z"><i class="hl"></i><span class="zi"><svg class="g"><use href="#gear"/></svg><u>AZ-34</u></span></div>
              </div>
              <div class="vs mid-vs"><svg class="sarrow"><use href="#cu"/></svg><div class="thumb"></div><svg class="sarrow bottom"><use href="#cd"/></svg></div>
            </div>
          </div>
        </div>
        <div class="props">
          <div class="tabstrip"><span class="ptab">属性编辑</span></div>
          <div class="ppanel">
            <table class="grid">
              <thead><tr><th class="n"></th><th class="name">属性名称</th><th class="hot">属性值</th><th>附加</th></tr></thead>
              <tbody>
                <tr class="cur"><td class="n">1</td><td class="nm">名称</td><td class="m">AZ-20</td><td></td></tr>
                <tr><td class="n">2</td><td class="nm lk">类别</td><td>暗柱</td><td></td></tr>
                <tr><td class="n">3</td><td class="nm lk">截面编辑</td><td>是</td><td></td></tr>
                <tr><td class="n">4</td><td class="nm">截面形状</td><td>异形</td><td></td></tr>
                <tr><td class="n">5</td><td class="nm gy">截面宽(B边)(mm)</td><td class="small">500</td><td></td></tr>
                <tr><td class="n">6</td><td class="nm gy">截面高(H边)(mm)</td><td class="small">650</td><td></td></tr>
                <tr><td class="n">7</td><td class="nm gy">全部纵筋</td><td class="small">8<svg class="rb"><use href="#rebar"/></svg>14+4<svg class="rb"><use href="#rebar"/></svg>10</td><td></td></tr>
                <tr><td class="n">8</td><td class="nm lk">其它箍筋</td><td></td><td></td></tr>
                <tr><td class="n">9</td><td class="nm">备注</td><td></td><td></td></tr>
                <tr><td class="n">10</td><td class="nm gy"><i class="box">+</i>芯柱</td><td></td><td></td></tr>
                <tr><td class="n">15</td><td class="nm gy"><i class="box">−</i>其它属性</td><td></td><td></td></tr>
                <tr><td class="n">16</td><td class="sub">汇总信息</td><td>暗柱/端柱</td><td></td></tr>
                <tr><td class="n">17</td><td class="sub">保护层厚度(mm)</td><td>(20)</td><td></td></tr>
                <tr><td class="n">18</td><td class="sub">上加密范围(mm)</td><td></td><td></td></tr>
                <tr><td class="n">19</td><td class="sub">下加密范围(mm)</td><td></td><td></td></tr>
                <tr><td class="n">20</td><td class="sub">插筋构造</td><td>设置插筋</td><td></td></tr>
                <tr><td class="n">21</td><td class="sub">插筋信息</td><td></td><td></td></tr>
                <tr><td class="n">22</td><td class="sub">计算设置</td><td>按默认计算设置计算</td><td></td></tr>
                <tr><td class="n">23</td><td class="sub">节点设置</td><td>按默认节点设置计算</td><td></td></tr>
                <tr><td class="n">24</td><td class="sub">搭接设置</td><td>按默认搭接设置计算</td><td></td></tr>
                <tr><td class="n">25</td><td class="sub">顶标高(m)</td><td>层顶标高</td><td></td></tr>
                <tr><td class="n">26</td><td class="sub end">底标高(m)</td><td>基础底标高</td><td></td></tr>
                <tr><td class="n">27</td><td class="nm gy"><i class="box">+</i>锚固搭接</td><td></td><td></td></tr>
                <tr><td class="n">42</td><td class="nm gy"><i class="box">+</i>显示样式</td><td></td><td></td></tr>
              </tbody>
            </table>
            <div class="vs prop-vs"><svg class="sarrow"><use href="#cu"/></svg><div class="thumb"></div><svg class="sarrow bottom"><use href="#cd"/></svg></div>
          </div>
        </div>
      </div>
    </section>
  </main>

  <footer class="status">
    <span class="st s0"></span><span class="st s1">层高:<u>3.55m</u></span><span class="st s2">底标高:<u>-3.58m</u></span><span class="st s3"><u>0</u></span><span class="st s4">名称在当前层当前构件类型下不允许重名</span><span class="st s5"><u>967.6 FPS</u></span>
  </footer>

  <div class="taskbar">
    <span class="start"><svg class="w"><use href="#win"/></svg></span>
    <span class="tsearch"><i class="cort"></i><span class="tsearch-t">在这里输入你要搜索的内容</span><svg class="tmic"><use href="#mictb"/></svg></span>
    <span class="ti"><svg class="tico"><use href="#pin"/></svg></span>
    <span class="ti"><svg class="tico"><use href="#spir"/></svg></span>
    <span class="ti ti-gap"><svg class="tico"><use href="#edge"/></svg></span>
    <span class="ti"><svg class="tico"><use href="#store"/></svg></span>
    <span class="ti"><svg class="tico"><use href="#expl"/></svg></span>
    <span class="ti run"><svg class="tico"><use href="#gapp"/></svg></span>
    <span class="ti run act"><svg class="tico big"><use href="#gtj"/></svg></span>
    <span class="ti run"><svg class="tico"><use href="#note"/></svg></span>
    <span class="ti run"><svg class="tico"><use href="#iee"/></svg></span>
    <span class="ti run"><svg class="tico"><use href="#help"/></svg></span>
    <span class="tcpu"><span>25%</span><span>CPU使用</span></span>
    <span class="tray">
      <svg class="caret-up" viewBox="0 0 12 8"><path d="M1 7l5-6 5 6" fill="none" stroke="#eee"/></svg>
      <svg class="tr18"><use href="#batt"/></svg><svg class="tr18"><use href="#wifi"/></svg><svg class="tr18"><use href="#spk"/></svg><svg class="tr24"><use href="#kbw"/></svg>
      <b class="zh">中</b><span class="sgtray">S</span>
    </span>
    <span class="clock"><span>16:27</span><span>2017/9/30</span></span>
    <svg class="notif"><use href="#notif"/></svg>
  </div>
</div>

<svg class="defs" aria-hidden="true">
  <symbol id="cd" viewBox="0 0 12 12"><path d="M2 4l4 4 4-4" fill="none" stroke="#555" stroke-width="1.800"/></symbol>
  <symbol id="cu" viewBox="0 0 12 12"><path d="M2 8l4-4 4 4" fill="none" stroke="#555" stroke-width="1.800"/></symbol>
  <symbol id="cr" viewBox="0 0 12 12"><path d="M4 2l4 4-4 4" fill="none" stroke="#bbb" stroke-width="1.800"/></symbol>
  <symbol id="crb" viewBox="0 0 12 12"><path d="M4 2l4 4-4 4" fill="none" stroke="#555" stroke-width="1.800"/></symbol>
  <symbol id="cl" viewBox="0 0 12 12"><path d="M8 2L4 6l4 4" fill="none" stroke="#555" stroke-width="1.800"/></symbol>
</svg>

<div class="balloon"><span>71</span></div>

<div class="ime">
  <span class="ime-s">S</span>
  <div class="ime-bar"><b>英</b><b class="punc">°,</b><svg class="i"><use href="#mic"/></svg><svg class="i"><use href="#kbd"/></svg><svg class="i"><use href="#ppl"/></svg><svg class="i"><use href="#shirt"/></svg><svg class="i"><use href="#wrench"/></svg></div>
</div>

<section class="dialog">
  <h2 class="d-title">截面编辑</h2>
  <div class="d-tabs"><span class="d-tab">截面</span><span class="d-tab on">配筋</span></div>
  <div class="d-pane">
    <div class="d-tool1"><i class="grip"></i><span>布角筋</span><span>布边筋</span><span>特殊布筋</span><span>对齐钢筋</span><span>画箍筋</span><i class="d-sep"></i><span>修改纵筋</span><span>修改箍筋</span><span>编辑弯钩</span><span>端头伸缩</span><span class="off">删除</span></div>
    <div class="d-tool2"><i class="grip"></i><span class="d-lbl">钢筋信息</span><span class="d-sel">C10@150<i class="car"></i></span></div>
    <svg class="cad" viewBox="688 244 644 424">
      <rect x="688" y="244" width="644" height="424" fill="#000"/>
      <g class="gridl">
        <path d="M690 264.500H1185M690 459.500H1185M690 654.500H1185M789.500 246V663M919.500 246V663M1048.500 246V663M1178.500 246V663"/>
      </g>
      <path class="outline" d="M810 319H1026V600H940V405H810Z"/>
      <path class="leader" d="M1026 319L1072 275"/>
      <g class="dims">
        <path d="M810 301H1026M810 288V313M1026 288V313M801 311L819 293M1017 311L1035 293"/>
        <path d="M792 319V405M780 319H805M780 405H805M783 310L801 328M783 396L801 414"/>
        <path d="M1043 319V600M1030 319H1056M1030 600H1056M1034 310L1052 328M1034 591L1052 609"/>
        <path d="M922 405V600M909 405H935M909 600H935M913 396L931 414M913 591L931 609"/>
        <path d="M810 422H939M810 409V435M939 409V435M801 432L819 414M930 432L948 414"/>
        <path d="M939 617H1026M939 604V630M1026 604V630M930 626L948 608M1017 626L1035 608"/>
      </g>
      <g class="rebars">
        <path d="M827 329H1009L1015 335V582L1009 589H956L950 582V395H827L820 388V336Z"/>
        <path d="M885 332V392L889 395M950 329V395M950 492H1015"/>
        <path d="M828 332L857 359M821 337L850 367M892 333L923 359M923 365L892 395"/>
        <path d="M950 485L980 455M985 455L1013 485M985 552L1015 583M978 560L1003 587"/>
      </g>
      <g class="dots y">
        <circle cx="825" cy="334" r="2"/><circle cx="954" cy="334" r="2"/><circle cx="1011" cy="334" r="2"/>
        <circle cx="825" cy="390" r="2"/><circle cx="954" cy="390" r="2"/><circle cx="1011" cy="390" r="2"/>
        <circle cx="954" cy="584" r="2"/><circle cx="1011" cy="584" r="2"/>
      </g>
      <g class="dots p">
        <circle cx="890" cy="334" r="2"/><circle cx="890" cy="390" r="2"/><circle cx="954" cy="487" r="2"/><circle cx="1011" cy="487" r="2"/>
      </g>
      <ellipse class="mark" cx="981" cy="546" rx="76" ry="100"/>
      <path class="arrow" d="M1133 395L1058 503"/>
      <path class="arrowh" d="M1053 511L1056 489 1070 500Z"/>
      <g class="lbls">
        <text x="905" y="291">500</text>
        <text x="761" y="369">200</text>
        <text x="861" y="447">300</text>
        <text x="1047" y="466">650</text>
        <text x="892" y="509">450</text>
        <text x="969" y="641">200</text>
        <text class="cn" x="1074" y="279">全部纵筋</text>
        <text class="gn" x="1149" y="280">8C14+4C10</text>
      </g>
      <text class="note" x="1136" y="387">非阴影部分</text>
    </svg>
  </div>
  <div class="d-status"><span class="d-xy">(X: 837 Y: 496)</span><span class="d-st2"></span></div>
</section>
</body>
</html>
```

FILE: styles.css
```css
* { box-sizing: border-box; }
html, body { margin: 0; padding: 0; width: 1366px; height: 768px; overflow: hidden; }
body { position: relative; font: 12px/16px "Liberation Sans", "Noto Sans CJK SC", sans-serif; color: #111; background: #f0f0f0; }
.defs { width: 0; height: 0; position: absolute; }
i, u, b { font-style: normal; text-decoration: none; }
u { font: 11px/16px "Liberation Mono", monospace; letter-spacing: -.6px; }

.app { display: grid; grid-template-rows: 23px 30px 30px 624px 21px 40px; height: 768px; }
.i { width: 16px; height: 16px; flex: none; display: block; }
.car { display: inline-block; width: 0; height: 0; border: 3px solid transparent; border-top: 3px solid #333; border-bottom: 0; flex: none; }
.more { font: 700 11px/12px "Liberation Sans", sans-serif; color: #222; flex: none; }
.sep { width: 1px; height: 22px; background: #c8c8c8; flex: none; display: block; }

/* title */
.titlebar { background: #fff; display: flex; align-items: center; padding-left: 2px; }
.logo { width: 16px; height: 17px; flex: none; }
.title-text { margin-left: 5px; color: #808080; font-size: 12.65px; white-space: nowrap; }
.winctl { margin-left: auto; padding-right: 2px; display: flex; align-items: center; height: 20px; }
.winctl span { width: 46px; display: flex; justify-content: center; align-items: center; color: #888; }
.wmin::before { content: ""; width: 10px; height: 1px; background: #888; }
.wmax::before { content: ""; width: 9px; height: 9px; border: 1px solid #888; box-shadow: 2px -2px 0 -1px #fff, 2px -2px 0 0 #888; }
.wclose { font-size: 14px; }

/* menu */
.menubar { background: #f5f5f5; display: flex; align-items: center; padding-left: 7px; gap: 10px; white-space: nowrap; }
.menubar > span { flex: none; }
.mi { display: flex; align-items: center; gap: 4px; }
.mi .car { margin-left: 6px; }
.qa { width: 185px; height: 26px; margin-left: -6px; padding-left: 29px; background: #fbfbfb; color: #00707a; line-height: 26px; border-radius: 3px; }
.acct { display: flex; align-items: center; height: 26px; width: 222px; margin-left: -6px; padding-left: 3px; background: #fbfbfb; border-radius: 3px; gap: 4px; }
.acct .car { margin-left: 5px; margin-right: 5px; }
.beans { font-weight: 400; }
.bell { margin-left: 4px; }
.menubar .more { margin-left: -4px; }

/* toolbar 1 */
.toolbar1 { display: flex; align-items: stretch; padding: 0 0 3px 2px; gap: 3px; white-space: nowrap; }
.tgrp { background: #f9f9f9; border-radius: 3px; display: flex; align-items: center; }
.g-a { width: 147px; padding-left: 3px; gap: 5px; }
.g-a .car { margin-left: 3px; margin-right: 3px; }
.g-a .sep { margin: 0 4px 0 1px; }
.g-a .more { margin-left: 14px; }
.g-b { width: 548px; padding-left: 6px; }
.g-b .more { margin-left: 32px; }
.g-c { flex: 1; padding-left: 3px; }
.g-c .more { margin-left: 22px; }
.it { display: flex; align-items: center; margin-right: 8px; flex: none; }
.it .i { margin-right: 3px; }
.it .car { margin-left: 6px; }
.dis, .dis .it { color: #9c9c9c; }
.dis .car { border-top-color: #888; }
.sigma { width: 16px; margin-right: 3px; text-align: center; font: 700 15px/16px "Liberation Serif", serif; color: #111; }
.viewsel { width: 61px; height: 23px; border: 1px solid #707070; margin-right: 4px; display: flex; align-items: center; padding-left: 3px; gap: 3px; background: #fafafa; color: #999; }
.viewsel .car { margin-left: 5px; }
.sq { width: 14px; height: 12px; background: #e2e2e2; border: 1px solid #ccc; }
.g-c .sep { margin: 0 6px 0 -1px; }
.g-c .sep.sep-end { margin: 0 4px 0 -1px; }

/* work */
.work { display: flex; min-height: 0; }
.nav { width: 143px; flex: none; padding: 2px 3px 1px 0; display: flex; flex-direction: column; }
.nav-head { height: 15px; display: flex; align-items: center; border: 1px solid #c0c0c0; border-width: 1px 1px 1px 0; line-height: 13px; background: #f5f5f5; }
.nav-head span:first-child { flex: 1; }
.nav-ctl { font-size: 9px; width: 17px; text-align: center; }
.nav-x { width: 15px; text-align: center; color: #333; }
.nav-btn { height: 22px; margin-left: 1px; text-align: center; font-size: 13px; line-height: 21px; background: #efefef; border: 1px solid #c8c8c8; }
.nav-head + .nav-btn { height: 23px; }
.nav-tools { height: 27px; margin-left: 1px; padding: 6px 0 0 6px; display: flex; gap: 7px; background: linear-gradient(#fff, #f0f0f0); }
.pm { width: 16px; height: 15px; flex: none; }
.frame { border: 2px solid #a3a3a3; margin-left: 2px; margin-right: 1px; height: 488px; flex: none; display: flex; flex-direction: column; background: #fff; }
.frame-top { flex: 1; min-height: 0; display: flex; }
.tree { flex: 1; min-width: 0; overflow: hidden; background: #fff; font-size: 12px; }
.r { height: 16px; display: flex; align-items: center; white-space: nowrap; }
.r span { line-height: 16px; }
.hl { display: block; border-top: 1px dotted #777; height: 0; flex: none; }
.chev { width: 12px; height: 12px; flex: none; }
.lefttree { padding-top: 1px; background: linear-gradient(#888 50%, transparent 50%) 11px 0 / 1px 2px repeat-y #fff; }
.root { padding-left: 4px; background: transparent; }
.root .hl { width: 6px; margin: 0 2px 0 1px; }
.root .chev { background: #fff; }
.root .i { margin-right: 5px; }
.c { padding-left: 30px; background: linear-gradient(#888 50%, transparent 50%) 30px 0 / 1px 2px repeat-y; }
.c.last { background: linear-gradient(#fff, #fff) 30px 8px / 1px 8px no-repeat, linear-gradient(#888 50%, transparent 50%) 30px 0 / 1px 2px repeat-y; }
.c .hl { width: 11px; }
.c .i { margin-right: 5px; }
.sel { display: flex; align-items: center; background: #d6d6d6; width: 70px; }
.vs { width: 16px; flex: none; background: #f0f0f0; display: flex; flex-direction: column; }
.sarrow { width: 16px; height: 16px; flex: none; display: block; }
.thumb { background: #c8c8c8; }
.bottom { margin-top: auto; }
.left-vs .thumb { height: 303px; }
.mid-vs .thumb { height: 488px; }
.hs { height: 18px; flex: none; display: flex; align-items: center; background: #f0f0f0; }
.hthumb { width: 63px; height: 16px; background: #c8c8c8; margin-right: 21px; margin-left: 0; }
.hs .sarrow:last-child { margin-left: 2px; }
.b2 { height: 22px; font-size: 13px; }
.nav .frame + .b2 { margin-top: 1px; }

.content { flex: 1; min-width: 0; display: flex; flex-direction: column; }
.toolbar2 { height: 28px; flex: none; display: flex; align-items: center; padding-left: 7px; background: #f8f8f8; margin-top: 1px; white-space: nowrap; }
.it2 { display: flex; align-items: center; margin-right: 8px; flex: none; }
.it2 .i { margin-right: 3px; }
.it2 .car { margin-left: 2px; }
.sp2 { margin: 0 2px 0 -2px; }
.lbl { display: flex; align-items: center; flex: none; }
.floor { width: 64px; height: 25px; margin: 0 2px 0 6px; padding-left: 2px; background: #fff; display: flex; align-items: center; }
.floor .car { margin-left: 14px; }
.sp3 { margin: 0 5px 0 2px; }
.sp4 { margin: 0 6px 0 -1px; }
.sp5 { margin: 0 6px 0 0; }
.lbl .car { margin-left: 4px; }
.sp6 { margin: 0 6px 0 6px; }
.body { flex: 1; min-height: 0; display: flex; background: #fff; }
.mid { width: 191px; flex: none; padding: 6px 0 0 3px; background: #f0f0f0; }
.search { display: flex; height: 24px; gap: 1px; }
.search-in { width: 157px; border: 1px solid #7a7a7a; background: #fff; color: #888; padding-left: 2px; line-height: 22px; }
.search-btn { width: 22px; background: #fff; display: flex; align-items: center; justify-content: center; }
.midframe { width: 184px; height: 564px; margin: 1px 0 0 -1px; background: #fff; }
.aztree { background: #fff; }
.zroot { padding-left: 4px; }
.zroot .hl { width: 4px; margin: 0 2px 0 1px; }
.zroot .i { margin-right: 4px; }
.z { padding-left: 31px; background: linear-gradient(#888 50%, transparent 50%) 31px 0 / 1px 2px repeat-y; }
.z .hl { width: 8px; }
.zi { display: flex; align-items: center; height: 16px; width: 57px; padding-left: 3px; }
.g { width: 12px; height: 12px; flex: none; margin-right: 8px; }
.zi.on { background: #316ac5; color: #dfe8f7; }

.props { flex: 1; min-width: 0; display: flex; flex-direction: column; }
.tabstrip { height: 22px; flex: none; padding-top: 1px; background: #fff; }
.ptab { display: inline-block; width: 60px; height: 21px; text-align: center; line-height: 20px; border: 1px solid #d0d0d0; border-bottom: 0; background: #fff; }
.ppanel { flex: 1; min-height: 0; display: flex; align-items: flex-start; border: 1px solid #b5b5b5; border-width: 1px 0 0 1px; margin-left: 2px; padding: 3px 5px 0 1px; background: #f4f4f4; }
.grid { width: 1007px; flex: none; border-collapse: separate; border-spacing: 0; table-layout: fixed; background: #fff; }
.grid th { height: 22px; padding: 2px 0 0; font-weight: 400; border-right: 1px solid #c4c4c4; border-bottom: 1px solid #c4c4c4; background: linear-gradient(#fafafa, #e8e8e8); }
.grid th.n { width: 21px; }
.grid th.name { width: 190px; }
.grid th.hot { width: 276px; background: linear-gradient(#fbe3b8, #f1c36f); color: #5a0f3a; }
.grid tbody tr { height: 19px; }
.grid td { height: 19px; padding: 3px 0 0 2px; border-right: 1px solid #c4c4c4; border-bottom: 1px solid #c4c4c4; line-height: 15px; white-space: nowrap; overflow: hidden; vertical-align: top; }
.grid td.n { padding: 2px 0 0; text-align: center; font: 11px/16px "Liberation Mono", monospace; background: linear-gradient(#fafafa, #e8e8e8); }
.grid td.nm { padding-left: 20px; }
.lk { color: #0000f0; }
.gy { color: #8c8c8c; }
.small { color: #999; font-size: 11px; }
.rb { width: 10px; height: 11px; margin: 0 1px; vertical-align: -2px; }
.m { font: 11px/15px "Liberation Mono", monospace; letter-spacing: -.6px; }
.cur td.n { background: #fbd9a0; color: #7a1040; }
.cur td.nm { background: #0078d7; color: #fff; }
.cur td.m { background: #d5e8f8; }
.box { display: inline-block; width: 13px; height: 13px; margin-left: -17px; margin-right: 4px; border: 1px solid #aaa; color: #222; text-align: center; line-height: 10px; vertical-align: top; }
.grid td.sub { padding-left: 30px; background: linear-gradient(#c0c0c0, #c0c0c0) 8px 0 / 1px 100% no-repeat, linear-gradient(#c0c0c0, #c0c0c0) 9px 9px / 16px 1px no-repeat; }
.grid td.sub.end { background: linear-gradient(#c0c0c0, #c0c0c0) 8px 0 / 1px 10px no-repeat, linear-gradient(#c0c0c0, #c0c0c0) 9px 9px / 16px 1px no-repeat; }
.prop-vs { background: #f0f0f0; align-self: stretch; margin-top: 10px; margin-bottom: 5px; }
.prop-vs .thumb { height: 299px; }

/* status */
.status { display: flex; gap: 2px; padding-top: 1px; background: #f0f0f0; white-space: nowrap; }
.st { border: 1px solid #dcdcdc; background: #f7f7f7; line-height: 18px; padding-left: 1px; flex: none; height: 20px; }
.s0 { width: 148px; }
.s1 { width: 79px; }
.s2 { width: 98px; }
.s3 { width: 48px; padding-left: 2px; }
.s4 { width: 914px; }
.s5 { flex: 1; }

/* taskbar */
.taskbar { background: #05090b; display: flex; align-items: center; color: #fff; }
.start { width: 48px; height: 40px; background: #000; display: flex; align-items: center; justify-content: center; flex: none; }
.w { width: 16px; height: 16px; }
.tsearch { width: 345px; height: 40px; background: #333; display: flex; align-items: center; padding-left: 11px; flex: none; }
.cort { width: 20px; height: 20px; border: 3px solid #e6e6e6; border-radius: 50%; flex: none; }
.tsearch-t { margin-left: 5px; color: #8f8f8f; font-size: 14px; }
.tmic { width: 16px; height: 18px; margin-left: 110px; }
.ti { width: 49px; height: 40px; display: flex; align-items: center; justify-content: center; flex: none; border-bottom: 2px solid transparent; }
.ti-gap { margin-left: 5px; }
.tico { width: 24px; height: 24px; }
.tico.big { width: 24px; height: 28px; }
.run { border-bottom-color: #76b9ed; background-clip: padding-box; }
.act { background-color: #2b2e30; }
.tcpu { width: 64px; margin-left: 96px; display: flex; flex-direction: column; align-items: center; font-size: 13px; line-height: 18px; flex: none; }
.tray { display: flex; align-items: center; margin-left: 12px; gap: 6px; width: 185px; flex: none; }
.caret-up { width: 12px; height: 8px; flex: none; margin-right: 4px; }
.tr18 { width: 18px; height: 16px; flex: none; }
.tr24 { width: 24px; height: 16px; flex: none; margin-left: 2px; }
.zh { font-size: 14px; margin-left: 4px; }
.sgtray { width: 14px; height: 17px; background: #e8501a; color: #fff; font: 700 12px/17px "Liberation Sans", sans-serif; text-align: center; border-radius: 3px; transform: rotate(-8deg); margin-left: 6px; }
.clock { width: 62px; display: flex; flex-direction: column; align-items: center; font-size: 13px; line-height: 19px; flex: none; margin-left: -2px; }
.notif { width: 18px; height: 18px; margin-left: 18px; flex: none; }

/* overlays */
.balloon { position: absolute; left: 962px; top: -25px; width: 44px; height: 44px; border-radius: 50%; background: #3cb85a; border: 2px solid #8fd69e; box-shadow: 0 1px 3px #888; color: #fff; font: 700 11px/12px "Liberation Sans", sans-serif; text-align: center; padding-top: 26px; }
.ime { position: absolute; left: 822px; top: 35px; height: 27px; display: flex; align-items: flex-start; }
.ime-s { width: 27px; height: 25px; margin-top: 2px; background: #f04e14; color: #fff; font: 700 22px/25px "Liberation Sans", sans-serif; text-align: center; border-radius: 3px; transform: rotate(-12deg); z-index: 1; }
.ime-bar { width: 157px; height: 23px; margin-top: 4px; background: #eef3f9; border: 1px solid #c5d2e2; display: flex; align-items: center; padding-left: 4px; gap: 7px; color: #1f7ad0; }
.ime-bar b { font-size: 14px; width: 16px; text-align: center; }
.ime-bar .punc { font-size: 12px; width: 14px; }
.dialog { position: absolute; left: 675px; top: 131px; width: 669px; height: 573px; border: 1px solid #2c2c2c; border-top-width: 2px; background: #b6d0e8; display: flex; flex-direction: column; padding: 0 6px 6px 7px; }
.d-title { margin: 0 -6px 0 -7px; padding: 10px 0 0 7px; height: 30px; flex: none; font-size: 12px; font-weight: 400; line-height: 16px; color: #222; background: linear-gradient(#9bb5d1, #b9d3ea); }
.d-tabs { height: 21px; flex: none; display: flex; padding-left: 2px; gap: 1px; background: #f0f0f0; align-items: flex-end; }
.d-tab { width: 46px; height: 19px; padding-left: 5px; line-height: 19px; background: #f0f0f0; border: 1px solid #d6d6d6; border-bottom: 0; }
.d-tab.on { width: 50px; height: 21px; background: #fff; line-height: 18px; }
.d-pane { flex: none; height: 492px; background: #f0f0f0; border: 1px solid #d9d9d9; padding: 2px 3px 0 4px; display: flex; flex-direction: column; }
.d-tool1 { height: 27px; flex: none; display: flex; align-items: center; gap: 10px; padding-left: 2px; background: #f8f8f8; white-space: nowrap; color: #222; }
.grip { width: 2px; height: 14px; background: linear-gradient(#bbb 50%, transparent 50%) 0 0 / 2px 4px; flex: none; margin-right: -2px; }
.d-sep { width: 1px; height: 14px; background: #bbb; margin: 0 -3px 0 -2px; flex: none; }
.off { color: #8a8a6a; }
.d-tool2 { height: 30px; width: 196px; flex: none; display: flex; align-items: center; padding: 0 0 1px 4px; gap: 6px; background: #f8f8f8; }
.d-lbl { color: #8a8a8a; margin-right: -4px; }
.d-sel { width: 133px; height: 23px; border: 1px solid #808080; display: flex; align-items: center; justify-content: space-between; padding: 0 5px 0 1px; color: #808080; font-size: 13px; }
.cad { width: 644px; height: 424px; flex: none; display: block; border: 0; outline: 2px solid #f00; outline-offset: -2px; shape-rendering: crispEdges; }
.gridl path { stroke: #505050; stroke-width: 1; stroke-dasharray: 7 3; fill: none; }
.outline { fill: none; stroke: #fff; stroke-width: 2; }
.leader { stroke: #fff; stroke-width: 1; }
.dims path { stroke: #00f000; stroke-width: 2; fill: none; }
.rebars path { stroke: #f00; stroke-width: 4; fill: none; }
.dots circle { fill: #000; stroke-width: 1.500; }
.dots.y circle { stroke: #ff0; }
.dots.p circle { stroke: #f0f; }
.mark { fill: none; stroke: #f00; stroke-width: 3; }
.arrow { stroke: #f00; stroke-width: 3; fill: none; }
.arrowh { fill: #f00; }
.lbls text { fill: #fff; font: 16.500px "Liberation Sans", sans-serif; }
.lbls .cn { font: 16.500px "Noto Sans CJK SC", sans-serif; }
.lbls .gn { fill: #00f000; font: 16px "Liberation Mono", monospace; letter-spacing: -.5px; }
.note { fill: #f00; font: 700 21px "Noto Sans CJK SC", sans-serif; letter-spacing: 1.600px; }
.d-status { flex: none; height: 19px; margin-top: 1px; display: flex; gap: 2px; background: #f2f2f2; border: 1px solid #e0e0e0; }
.d-xy { width: 148px; font: 10px/18px "Liberation Mono", monospace; padding-left: 6px; border-right: 1px solid #dcdcdc; }
.d-st2 { flex: 1; border-left: 1px solid #dcdcdc; }
```
